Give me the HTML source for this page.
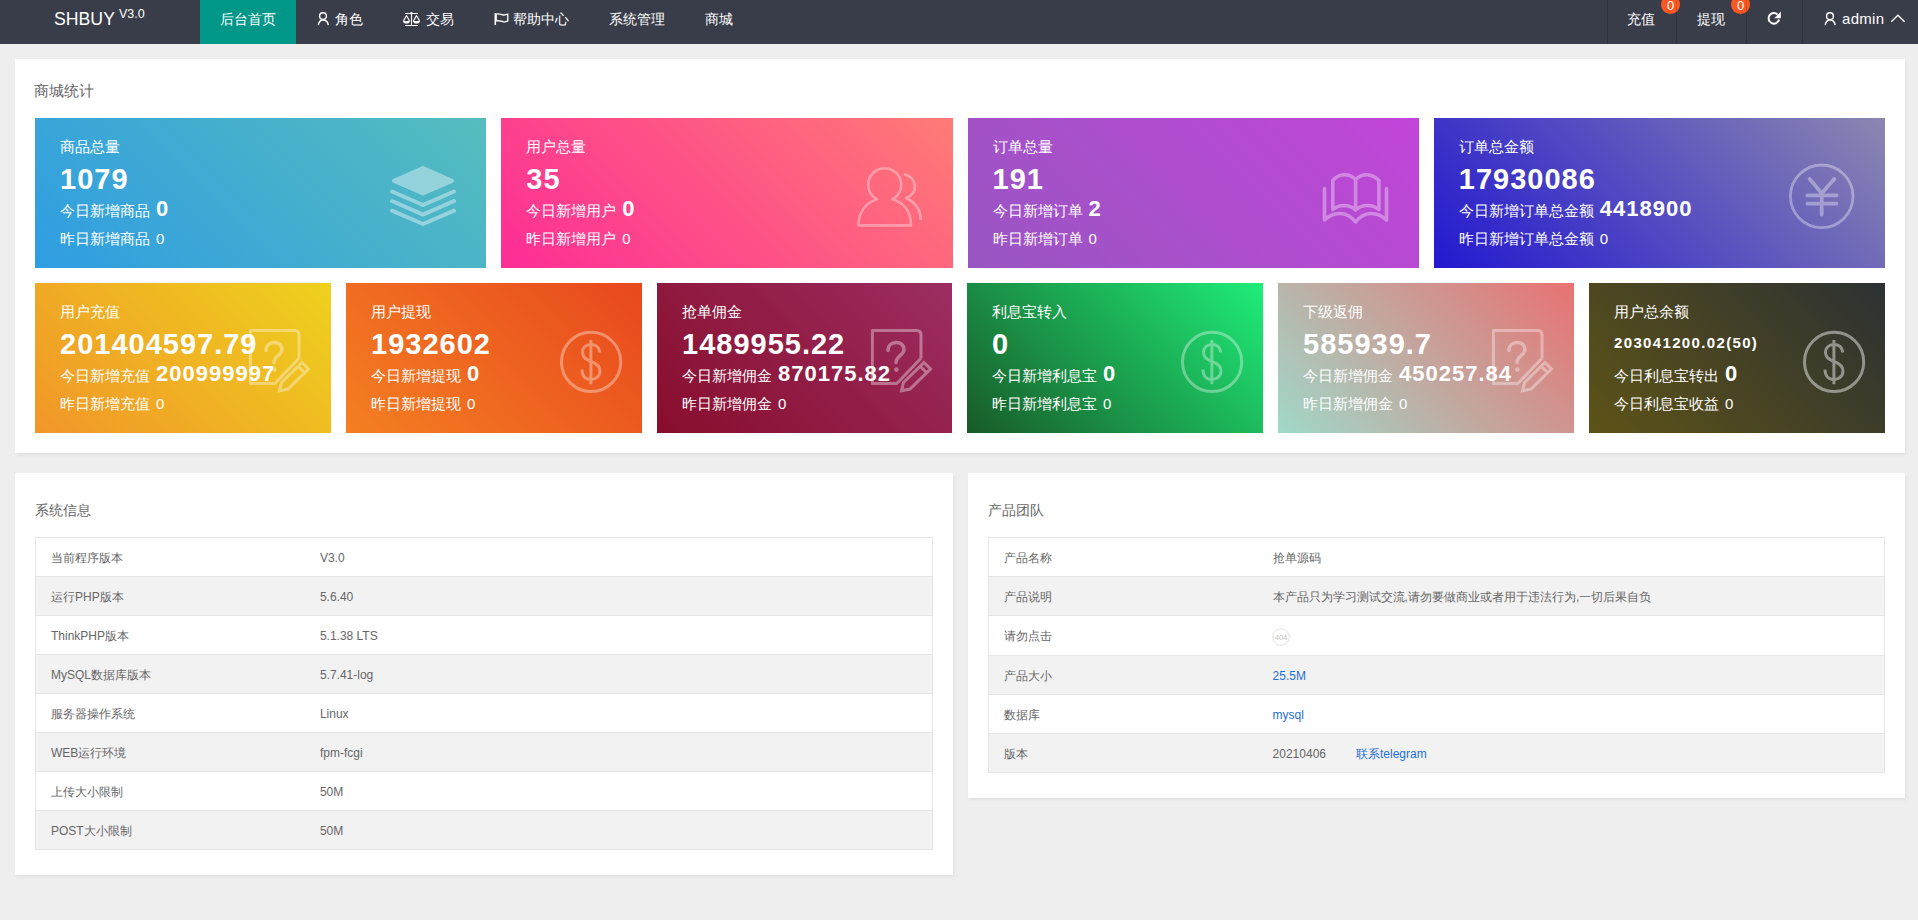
<!DOCTYPE html>
<html><head><meta charset="utf-8">
<style>
*{box-sizing:border-box;margin:0;padding:0}
html,body{width:1918px;height:920px;overflow:hidden}
body{position:relative;background:#eeeeee;font-family:"Liberation Sans",sans-serif;color:#333}
.a{position:absolute;white-space:nowrap}
.hdr{position:absolute;left:0;top:0;width:1918px;height:44px;background:#393d49;color:#fff}
.hdr .t{position:absolute;top:9px;font-size:14px;line-height:20px;color:#fff;white-space:nowrap}
.hdr svg{position:absolute}
.dv{position:absolute;top:0;width:1px;height:44px;background:rgba(0,0,0,.15)}
.badge{position:absolute;top:-5px;width:19px;height:19px;border-radius:50%;background:#ff5722;color:#fff;font-size:13px;line-height:21px;text-align:center}
.dv{z-index:2}
.card{position:absolute;background:#fff;box-shadow:1px 2px 3px rgba(0,0,0,.06)}
.ctitle{position:absolute;font-size:15px;line-height:20px;color:#666;white-space:nowrap}
.ctitle.s{font-size:14.4px}
.blk{position:absolute;color:#fff;overflow:hidden}
.blk .ti{position:absolute;left:25px;top:19px;font-size:15px;line-height:20px;white-space:nowrap}
.blk .big{position:absolute;left:25px;top:46px;font-size:29px;line-height:30px;font-weight:bold;letter-spacing:1px;white-space:nowrap}
.blk .big.sm{font-size:15px;letter-spacing:1.35px;top:45px}
.blk .l3{position:absolute;left:25px;top:79px;font-size:15px;line-height:24px;white-space:nowrap}
.blk .l3 b{font-size:22px;letter-spacing:1px;margin-left:6px}
.blk .l4{position:absolute;left:25px;top:111px;font-size:15px;line-height:20px;white-space:nowrap}
.blk .l4 span{margin-left:6px}
.blk svg{position:absolute}
table{position:absolute;border-collapse:collapse;font-size:12px;color:#666;table-layout:fixed}
td{height:39px;border-top:1px solid #e6e6e6;border-bottom:1px solid #e6e6e6;padding:2px 15px 0;white-space:nowrap}
table{border-left:1px solid #e6e6e6;border-right:1px solid #e6e6e6}
tr:nth-child(even) td{background:#f2f2f2}
.lnk{color:#1e6fd9}

</style></head><body>
<div class="hdr">
  <div class="a" style="left:54px;top:9px;font-size:17.7px;line-height:20px">SHBUY</div>
  <div class="a" style="left:119px;top:7px;font-size:12.5px;line-height:14px">V3.0</div>
  <div class="a" style="left:200px;top:0;width:96px;height:44px;background:#009688"></div>
  <div class="t" style="left:220px">后台首页</div>
  <svg style="left:310px;top:8px" width="24" height="22" viewBox="310 8 24 22" fill="none" stroke="#fff" stroke-width="1.4"><circle cx="323" cy="16.1" r="3.4"/><path d="M318.3 25.2 C318.8 21.8 320.6 20 323.2 20 C325.8 20 327.8 21.8 328.3 25.2"/></svg>
  <div class="t" style="left:335px">角色</div>
  <svg style="left:398px;top:8px" width="26" height="22" viewBox="398 8 26 22" fill="none" stroke="#fff" stroke-width="1.1"><path d="M405 13.5 H418 M411.5 13.5 V25.5 M405 25.5 H418"/><circle cx="411.5" cy="13.3" r="1.3" fill="#fff" stroke="none"/><path d="M406.5 15.5 L403.3 21.2 M406.5 15.5 L409.7 21.2 M416.5 15.5 L413.3 21.2 M416.5 15.5 L419.7 21.2"/><path d="M403 21 H410 C409.8 22.6 408.5 23.6 406.5 23.6 C404.5 23.6 403.2 22.6 403 21 Z M413 21 H420 C419.8 22.6 418.5 23.6 416.5 23.6 C414.5 23.6 413.2 22.6 413 21 Z" fill="#fff" stroke="none"/></svg>
  <div class="t" style="left:426px">交易</div>
  <svg style="left:488px;top:8px" width="26" height="22" viewBox="488 8 26 22" fill="none" stroke="#fff" stroke-width="1.3"><path d="M495.3 13 V25" stroke-width="1.5"/><path d="M496.2 14.2 C499 13.2 501 14.8 503.5 15 C505 15.1 506.5 14.5 507.8 14.2 V21 C506.5 21.3 505 21.9 503.5 21.8 C501 21.6 499 20 496.2 21 Z"/></svg>
  <div class="t" style="left:513px">帮助中心</div>
  <div class="t" style="left:609px">系统管理</div>
  <div class="t" style="left:705px">商城</div>
  <div class="dv" style="left:1607px"></div>
  <div class="dv" style="left:1676px"></div>
  <div class="dv" style="left:1746px"></div>
  <div class="dv" style="left:1802px"></div>
  <div class="t" style="left:1627px">充值</div>
  <div class="t" style="left:1697px">提现</div>
  <div class="badge" style="left:1661px">0</div>
  <div class="badge" style="left:1731px">0</div>
  <svg style="left:1762px;top:8px" width="24" height="22" viewBox="1762 8 24 22" fill="none" stroke="#fff" stroke-width="2"><path d="M1779 19.5 A5.3 5.3 0 1 1 1777.6 14.6"/><path d="M1780.8 11.6 V18.2 H1774.3 Z" fill="#fff" stroke="none"/></svg>
  <svg style="left:1818px;top:8px" width="24" height="22" viewBox="1818 8 24 22" fill="none" stroke="#fff" stroke-width="1.4"><circle cx="1830" cy="16.2" r="3.4"/><path d="M1825.2 25.2 C1825.7 21.8 1827.5 20 1830.1 20 C1832.7 20 1834.7 21.8 1835.2 25.2"/></svg>
  <div class="t" style="left:1842px;font-size:15px;letter-spacing:0.3px">admin</div>
  <svg style="left:1886px;top:8px" width="24" height="22" viewBox="1886 8 24 22" fill="none" stroke="#fff" stroke-width="1.4"><path d="M1891.2 21.8 L1897.9 15.3 L1904.6 21.8"/></svg>
</div>

<div class="card" style="left:15px;top:59px;width:1890px;height:394px"></div>
<div class="ctitle" style="left:34px;top:81px">商城统计</div>
<div class="blk" style="left:35.00px;top:118px;width:451.25px;height:150px;background:linear-gradient(45deg,#2f9de2,#56bdbe)">
<svg style="left:345.00px;top:37px" width="90" height="80" viewBox="0 0 90 80"><g opacity="0.4" fill="none" stroke="#fff" stroke-width="4" stroke-linecap="round" stroke-linejoin="round"><path d="M14 25.8 L43 13 L72 25.8 L43 38.5 Z" fill="#fff"/>
<path d="M12 36.5 L43 50 L74 36.5 M12 46 L43 59.6 L74 46 M12 55.7 L43 69 L74 55.7"/></g></svg>
<div class="ti">商品总量</div>
<div class="big">1079</div>
<div class="l3">今日新增商品<b>0</b></div>
<div class="l4">昨日新增商品<span>0</span></div>
</div>
<div class="blk" style="left:501.25px;top:118px;width:451.25px;height:150px;background:linear-gradient(45deg,#fd2d96,#ff7b76)">
<svg style="left:343.75px;top:37px" width="90" height="80" viewBox="0 0 90 80"><g opacity="0.35" fill="none" stroke="#fff" stroke-width="2.6" stroke-linecap="round" stroke-linejoin="round"><path d="M32 44.3 A16.5 16.5 0 1 1 47.4 44.3 C60 48 66 58 66 70.4 L13.5 70.4 C13.5 58 20 48 32 44.3 Z"/>
<path d="M60 19.6 A12 12 0 0 1 61 43 C70 47 75.5 55 75.7 63.9"/></g></svg>
<div class="ti">用户总量</div>
<div class="big">35</div>
<div class="l3">今日新增用户<b>0</b></div>
<div class="l4">昨日新增用户<span>0</span></div>
</div>
<div class="blk" style="left:967.50px;top:118px;width:451.25px;height:150px;background:linear-gradient(45deg,#9856c2,#c245d9)">
<svg style="left:342.50px;top:42px" width="90" height="80" viewBox="0 0 90 80"><g opacity="0.35" fill="none" stroke="#fff" stroke-width="3.6" stroke-linecap="round" stroke-linejoin="round"><path d="M14.5 28.5 V60 C24 51 37 51 45.6 62 C54 51 67 51 76.5 60 V28.5"/>
<path d="M22.8 49.5 V20.5 C29 13 39 13 45.6 19.5 C52 13 62 13 68.9 20.5 V49.5 C62 44 52 44 45.6 50 C39 44 29 44 22.8 49.5 Z M45.6 19.5 V50"/></g></svg>
<div class="ti">订单总量</div>
<div class="big">191</div>
<div class="l3">今日新增订单<b>2</b></div>
<div class="l4">昨日新增订单<span>0</span></div>
</div>
<div class="blk" style="left:1433.75px;top:118px;width:451.25px;height:150px;background:linear-gradient(45deg,#2318d0,#8b87b0)">
<svg style="left:346.25px;top:37px" width="90" height="80" viewBox="0 0 90 80"><g opacity="0.35" fill="none" stroke="#fff" stroke-width="3.8" stroke-linecap="round" stroke-linejoin="round"><circle cx="41.7" cy="41.3" r="31.3" stroke-width="2.8"/>
<path d="M29.6 23.9 L41.7 38.3 L54.3 23.9 M27.4 40.4 H56.5 M27.4 48.7 H56.5 M41.7 38.3 V59.6"/></g></svg>
<div class="ti">订单总金额</div>
<div class="big">17930086</div>
<div class="l3">今日新增订单总金额<b>4418900</b></div>
<div class="l4">昨日新增订单总金额<span>0</span></div>
</div>
<div class="blk" style="left:35.00px;top:283px;width:296.00px;height:150px;background:linear-gradient(45deg,#f19629,#eed11d)">
<svg style="left:205.00px;top:37px" width="80" height="80" viewBox="0 0 80 80"><g opacity="0.36" fill="none" stroke="#fff" stroke-width="3" ><path d="M59 38.3 L34.8 63.5 H10.4 V10.4 H54.5 Q59 10.4 59 15 V38.3" stroke-linejoin="round"/>
<path d="M26 30.4 C26 20 42 20 42 29.6 C42 35 34 36 34 42.6" stroke-linecap="round" stroke-width="3.5"/>
<circle cx="34.4" cy="49.6" r="2.3" fill="#fff" stroke="none"/>
<path d="M39.5 70.8 L41.5 62.5 L62 42.5 L68.5 49 L48 69 Z M58.2 46.3 L64.7 52.8"/></g></svg>
<div class="ti">用户充值</div>
<div class="big">201404597.79</div>
<div class="l3">今日新增充值<b>200999997</b></div>
<div class="l4">昨日新增充值<span>0</span></div>
</div>
<div class="blk" style="left:346.00px;top:283px;width:296.00px;height:150px;background:linear-gradient(45deg,#f47f22,#e8481e)">
<svg style="left:204.00px;top:37px" width="80" height="80" viewBox="0 0 80 80"><g opacity="0.35" fill="none" stroke="#fff" stroke-width="3" ><circle cx="41.1" cy="41.9" r="29.6"/>
<path d="M40.9 20 V64.3" />
<path d="M49.5 32.6 C49.5 27 45.5 24.5 41 24.5 C35.5 24.5 32.5 28 32.5 32.5 C32.5 37.5 36 39.5 41 41.5 C46.5 43.5 50 46 50 51 C50 56 46 59.5 41 59.5 C35.5 59.5 32 56 32 49.5" /></g></svg>
<div class="ti">用户提现</div>
<div class="big">1932602</div>
<div class="l3">今日新增提现<b>0</b></div>
<div class="l4">昨日新增提现<span>0</span></div>
</div>
<div class="blk" style="left:657.00px;top:283px;width:295.00px;height:150px;background:linear-gradient(45deg,#880d2c,#9c2e62)">
<svg style="left:205.00px;top:37px" width="80" height="80" viewBox="0 0 80 80"><g opacity="0.36" fill="none" stroke="#fff" stroke-width="3" ><path d="M59 38.3 L34.8 63.5 H10.4 V10.4 H54.5 Q59 10.4 59 15 V38.3" stroke-linejoin="round"/>
<path d="M26 30.4 C26 20 42 20 42 29.6 C42 35 34 36 34 42.6" stroke-linecap="round" stroke-width="3.5"/>
<circle cx="34.4" cy="49.6" r="2.3" fill="#fff" stroke="none"/>
<path d="M39.5 70.8 L41.5 62.5 L62 42.5 L68.5 49 L48 69 Z M58.2 46.3 L64.7 52.8"/></g></svg>
<div class="ti">抢单佣金</div>
<div class="big">1489955.22</div>
<div class="l3">今日新增佣金<b>870175.82</b></div>
<div class="l4">昨日新增佣金<span>0</span></div>
</div>
<div class="blk" style="left:967.00px;top:283px;width:296.00px;height:150px;background:linear-gradient(45deg,#185a28,#1fed79)">
<svg style="left:204.00px;top:37px" width="80" height="80" viewBox="0 0 80 80"><g opacity="0.35" fill="none" stroke="#fff" stroke-width="3" ><circle cx="41.1" cy="41.9" r="29.6"/>
<path d="M40.9 20 V64.3" />
<path d="M49.5 32.6 C49.5 27 45.5 24.5 41 24.5 C35.5 24.5 32.5 28 32.5 32.5 C32.5 37.5 36 39.5 41 41.5 C46.5 43.5 50 46 50 51 C50 56 46 59.5 41 59.5 C35.5 59.5 32 56 32 49.5" /></g></svg>
<div class="ti">利息宝转入</div>
<div class="big">0</div>
<div class="l3">今日新增利息宝<b>0</b></div>
<div class="l4">昨日新增利息宝<span>0</span></div>
</div>
<div class="blk" style="left:1278.00px;top:283px;width:296.00px;height:150px;background:linear-gradient(45deg,#a0d8c8,#e87272)">
<svg style="left:205.00px;top:37px" width="80" height="80" viewBox="0 0 80 80"><g opacity="0.36" fill="none" stroke="#fff" stroke-width="3" ><path d="M59 38.3 L34.8 63.5 H10.4 V10.4 H54.5 Q59 10.4 59 15 V38.3" stroke-linejoin="round"/>
<path d="M26 30.4 C26 20 42 20 42 29.6 C42 35 34 36 34 42.6" stroke-linecap="round" stroke-width="3.5"/>
<circle cx="34.4" cy="49.6" r="2.3" fill="#fff" stroke="none"/>
<path d="M39.5 70.8 L41.5 62.5 L62 42.5 L68.5 49 L48 69 Z M58.2 46.3 L64.7 52.8"/></g></svg>
<div class="ti">下级返佣</div>
<div class="big">585939.7</div>
<div class="l3">今日新增佣金<b>450257.84</b></div>
<div class="l4">昨日新增佣金<span>0</span></div>
</div>
<div class="blk" style="left:1589.00px;top:283px;width:296.00px;height:150px;background:linear-gradient(45deg,#5d5317,#2d3133)">
<svg style="left:204.00px;top:37px" width="80" height="80" viewBox="0 0 80 80"><g opacity="0.45" fill="none" stroke="#fff" stroke-width="3" ><circle cx="41.1" cy="41.9" r="29.6"/>
<path d="M40.9 20 V64.3" />
<path d="M49.5 32.6 C49.5 27 45.5 24.5 41 24.5 C35.5 24.5 32.5 28 32.5 32.5 C32.5 37.5 36 39.5 41 41.5 C46.5 43.5 50 46 50 51 C50 56 46 59.5 41 59.5 C35.5 59.5 32 56 32 49.5" /></g></svg>
<div class="ti">用户总余额</div>
<div class="big sm">203041200.02(50)</div>
<div class="l3">今日利息宝转出<b>0</b></div>
<div class="l4">今日利息宝收益<span>0</span></div>
</div>
<div class="card" style="left:15px;top:473px;width:938px;height:402px"></div>
<div class="ctitle s" style="left:35px;top:500px">系统信息</div>
<table style="left:35px;top:537px;width:898px"><tr><td style="width:269.4px">当前程序版本</td><td>V3.0</td></tr><tr><td style="width:269.4px">运行PHP版本</td><td>5.6.40</td></tr><tr><td style="width:269.4px">ThinkPHP版本</td><td>5.1.38 LTS</td></tr><tr><td style="width:269.4px">MySQL数据库版本</td><td>5.7.41-log</td></tr><tr><td style="width:269.4px">服务器操作系统</td><td>Linux</td></tr><tr><td style="width:269.4px">WEB运行环境</td><td>fpm-fcgi</td></tr><tr><td style="width:269.4px">上传大小限制</td><td>50M</td></tr><tr><td style="width:269.4px">POST大小限制</td><td>50M</td></tr></table>
<div class="card" style="left:968px;top:473px;width:937px;height:325px"></div>
<div class="ctitle s" style="left:988px;top:500px">产品团队</div>
<table style="left:988px;top:537px;width:897px"><tr><td style="width:269.1px">产品名称</td><td>抢单源码</td></tr><tr><td style="width:269.1px">产品说明</td><td>本产品只为学习测试交流,请勿要做商业或者用于违法行为,一切后果自负</td></tr><tr style="height:40px"><td style="width:269.1px">请勿点击</td><td><svg width="18" height="18" viewBox="0 0 18 18" style="vertical-align:middle;position:relative;top:0px;left:-1px"><circle cx="9" cy="9" r="8.3" fill="none" stroke="#e2dede" stroke-width="0.9"/><text x="9" y="11.7" text-anchor="middle" font-size="7.6" fill="#c8c0c0" font-family="Liberation Sans">404</text></svg></td></tr><tr><td style="width:269.1px">产品大小</td><td><span class="lnk">25.5M</span></td></tr><tr><td style="width:269.1px">数据库</td><td><span class="lnk">mysql</span></td></tr><tr><td style="width:269.1px">版本</td><td>20210406<span class="lnk" style="margin-left:30px">联系telegram</span></td></tr></table>
</body></html>
